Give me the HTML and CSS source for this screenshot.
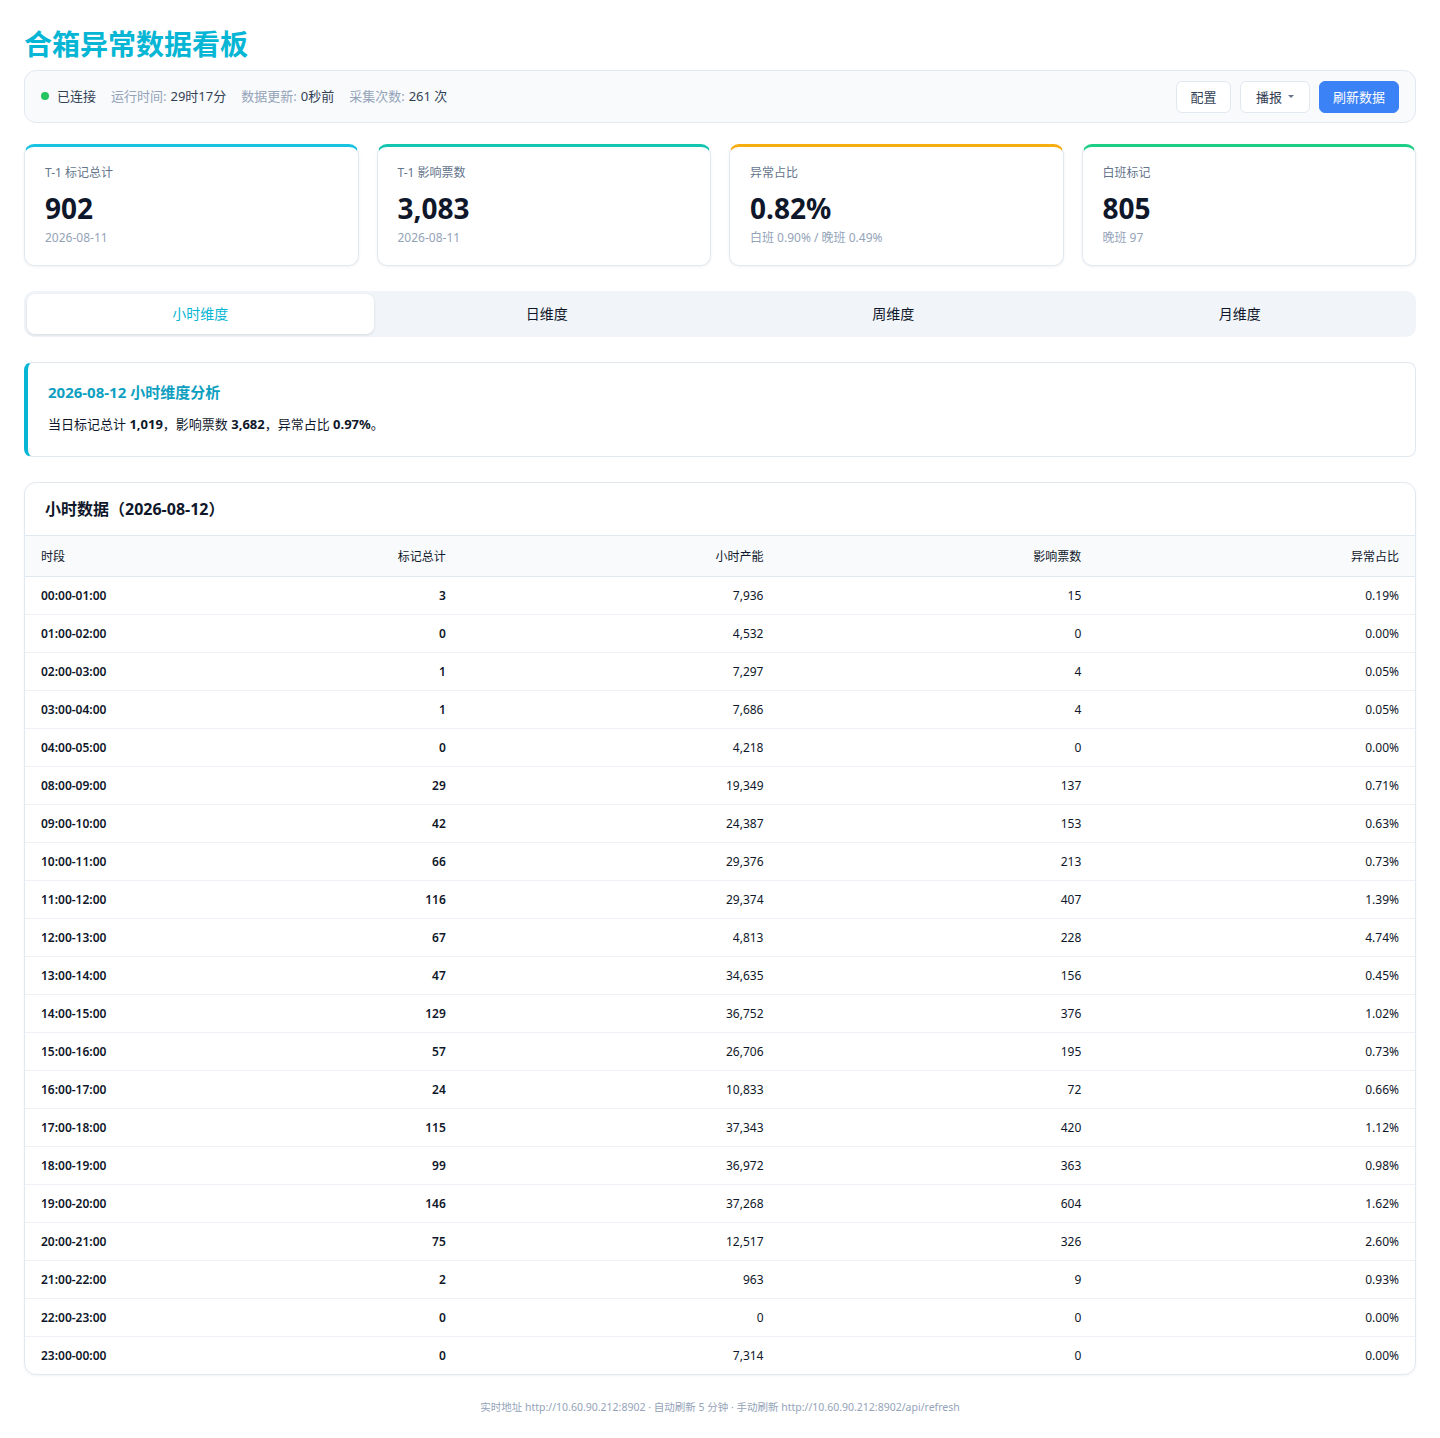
FILE: index.html
```html
<!DOCTYPE html>
<html lang="zh-CN">
<head>
  <meta charset="UTF-8" />
  <meta name="viewport" content="width=device-width, initial-scale=1.0"/>
  <title>合箱异常数据看板</title>
  <link rel="stylesheet" href="styles.css">
</head>
<body>
  <div class="page">
    <h1 class="title">合箱异常数据看板</h1>

    <!-- status bar -->
    <div class="status-bar">
      <div class="status-left">
        <span class="status-item"><i class="dot"></i><span class="val">已连接</span></span>
        <span class="status-item">运行时间: <span class="val">29时17分</span></span>
        <span class="status-item">数据更新: <span class="val">0秒前</span></span>
        <span class="status-item">采集次数: <span class="val">261 次</span></span>
      </div>
      <div class="status-actions">
        <button class="btn btn-config">配置</button>
        <button class="btn btn-report">播报 <span class="caret"></span></button>
        <button class="btn btn-primary">刷新数据</button>
      </div>
    </div>

    <!-- stat cards -->
    <div class="cards">
      <div class="card card-cyan">
        <div class="card-label">T-1 标记总计</div>
        <div class="card-value">902</div>
        <div class="card-sub">2026-08-11</div>
      </div>
      <div class="card card-teal">
        <div class="card-label">T-1 影响票数</div>
        <div class="card-value">3,083</div>
        <div class="card-sub">2026-08-11</div>
      </div>
      <div class="card card-amber">
        <div class="card-label">异常占比</div>
        <div class="card-value">0.82%</div>
        <div class="card-sub">白班 0.90% / 晚班 0.49%</div>
      </div>
      <div class="card card-green">
        <div class="card-label">白班标记</div>
        <div class="card-value">805</div>
        <div class="card-sub">晚班 97</div>
      </div>
    </div>

    <!-- tabs -->
    <div class="tabs">
      <div class="tab active">小时维度</div>
      <div class="tab">日维度</div>
      <div class="tab">周维度</div>
      <div class="tab">月维度</div>
    </div>

    <!-- summary -->
    <div class="summary">
      <div class="summary-title">2026-08-12 小时维度分析</div>
      <div class="summary-text">当日标记总计 <b>1,019</b>，影响票数 <b>3,682</b>，异常占比 <b>0.97%</b>。</div>
    </div>

    <!-- table -->
    <div class="table-card">
      <div class="table-title">小时数据（2026-08-12）</div>
      <table class="data-table">
        <thead>
          <tr>
            <th class="col-time">时段</th>
            <th>标记总计</th>
            <th>小时产能</th>
            <th>影响票数</th>
            <th>异常占比</th>
          </tr>
        </thead>
        <tbody id="rows"></tbody>
      </table>
    </div>

    <div class="footer">实时地址 http://10.60.90.212:8902 · 自动刷新 5 分钟 · 手动刷新 http://10.60.90.212:8902/api/refresh</div>
  </div>

  <script>
    const data = [
      ["00:00-01:00", "3", "7,936", "15", "0.19%"],
      ["01:00-02:00", "0", "4,532", "0", "0.00%"],
      ["02:00-03:00", "1", "7,297", "4", "0.05%"],
      ["03:00-04:00", "1", "7,686", "4", "0.05%"],
      ["04:00-05:00", "0", "4,218", "0", "0.00%"],
      ["08:00-09:00", "29", "19,349", "137", "0.71%"],
      ["09:00-10:00", "42", "24,387", "153", "0.63%"],
      ["10:00-11:00", "66", "29,376", "213", "0.73%"],
      ["11:00-12:00", "116", "29,374", "407", "1.39%"],
      ["12:00-13:00", "67", "4,813", "228", "4.74%"],
      ["13:00-14:00", "47", "34,635", "156", "0.45%"],
      ["14:00-15:00", "129", "36,752", "376", "1.02%"],
      ["15:00-16:00", "57", "26,706", "195", "0.73%"],
      ["16:00-17:00", "24", "10,833", "72", "0.66%"],
      ["17:00-18:00", "115", "37,343", "420", "1.12%"],
      ["18:00-19:00", "99", "36,972", "363", "0.98%"],
      ["19:00-20:00", "146", "37,268", "604", "1.62%"],
      ["20:00-21:00", "75", "12,517", "326", "2.60%"],
      ["21:00-22:00", "2", "963", "9", "0.93%"],
      ["22:00-23:00", "0", "0", "0", "0.00%"],
      ["23:00-00:00", "0", "7,314", "0", "0.00%"]
    ];
    const tbody = document.getElementById("rows");
    data.forEach(r => {
      const tr = document.createElement("tr");
      r.forEach((v, i) => {
        const td = document.createElement("td");
        td.textContent = v;
        if (i === 0) td.className = "col-time";
        if (i === 1) td.className = "strong";
        tr.appendChild(td);
      });
      tbody.appendChild(tr);
    });
  </script>
</body>
</html>
```

FILE: styles.css
```css
body {
  margin: 0;
  background: #fff;
  color: #0f172a;
  font-family: "Noto Sans", "Noto Sans CJK SC", sans-serif;
}

.page {
  padding: 24px 24px 20px;
}

.title {
  margin: 0 0 8px;
  font-size: 28px;
  line-height: 38px;
  font-weight: 700;
  color: #06b6d4;
  font-family: "Noto Sans CJK SC", sans-serif;
}

/* status bar */
.status-bar {
  display: flex;
  align-items: center;
  justify-content: space-between;
  height: 51px;
  padding: 0 16px;
  background: #f8fafc;
  border: 1px solid #e2e8f0;
  border-radius: 12px;
}

.status-left {
  display: flex;
  align-items: center;
  gap: 15px;
  font-size: 13px;
  line-height: 18px;
  color: #94a3b8;
  margin-top: -2px;
}

.status-item {
  display: flex;
  align-items: center;
  gap: 4px;
}

.status-item .val {
  color: #334155;
}

.dot {
  display: inline-block;
  width: 8px;
  height: 8px;
  margin: 0 4px 0 0;
  border-radius: 50%;
  background: #22c55e;
}

.status-actions {
  display: flex;
  gap: 9px;
}

.btn {
  height: 32px;
  padding: 0;
  border: 1px solid #e2e8f0;
  border-radius: 6px;
  background: #fff;
  color: #334155;
  font-size: 13px;
  font-family: inherit;
  white-space: nowrap;
  display: flex;
  align-items: center;
  justify-content: center;
  gap: 6px;
}

.btn-config { width: 55px; }
.btn-report { width: 70px; }

.btn-primary {
  width: 80px;
  background: #3b82f6;
  border-color: #3b82f6;
  color: #fff;
}

.caret {
  width: 0;
  height: 0;
  border-left: 3px solid transparent;
  border-right: 3px solid transparent;
  border-top: 3px solid #64748b;
}

/* stat cards */
.cards {
  display: grid;
  grid-template-columns: repeat(4, 1fr);
  gap: 18px;
  margin-top: 21px;
}

.card {
  height: 122px;
  box-sizing: border-box;
  padding: 17px 20px 0;
  border: 1px solid #e2e8f0;
  border-top: 3px solid #22d3ee;
  border-radius: 10px;
  background: #fff;
  box-shadow: 0 1px 3px rgba(15, 23, 42, 0.06);
}

.card-cyan { border-top-color: #17c3e0; }
.card-teal { border-top-color: #14c6b0; }
.card-amber { border-top-color: #f5ad10; }
.card-green { border-top-color: #1ccf85; }

.card-label {
  font-size: 12px;
  line-height: 18px;
  color: #64748b;
}

.card-value {
  margin-top: 8px;
  font-size: 28px;
  line-height: 36px;
  font-weight: 700;
  color: #0f172a;
}

.card-sub {
  margin-top: 4px;
  font-size: 12px;
  line-height: 16px;
  color: #94a3b8;
}

/* tabs */
.tabs {
  display: grid;
  grid-template-columns: repeat(4, 1fr);
  margin-top: 25px;
  padding: 3px;
  height: 46px;
  box-sizing: border-box;
  background: #f1f5f9;
  border-radius: 10px;
}

.tab {
  display: flex;
  align-items: center;
  justify-content: center;
  padding-bottom: 3px;
  font-size: 14px;
  color: #0f172a;
  border-radius: 8px;
}

.tab.active {
  background: #fff;
  color: #06b6d4;
  box-shadow: 0 1px 3px rgba(15, 23, 42, 0.12);
}

/* summary */
.summary {
  margin-top: 25px;
  height: 95px;
  box-sizing: border-box;
  padding: 18px 20px 0;
  border: 1px solid #e2e8f0;
  border-left: 4px solid #06b6d4;
  border-radius: 8px;
  background: #fff;
}

.summary-title {
  font-size: 15px;
  line-height: 22px;
  font-weight: 700;
  color: #0e9fc0;
}

.summary-text {
  margin-top: 11px;
  font-size: 13px;
  line-height: 20px;
  color: #0f172a;
}

.summary-text b {
  font-weight: 700;
}

/* table */
.table-card {
  margin-top: 25px;
  border: 1px solid #e2e8f0;
  border-radius: 12px;
  overflow: hidden;
  background: #fff;
  box-shadow: 0 1px 3px rgba(15, 23, 42, 0.05);
}

.table-title {
  height: 53px;
  box-sizing: border-box;
  padding: 0 20px 2px;
  display: flex;
  align-items: center;
  font-size: 16px;
  font-weight: 700;
  border-bottom: 1px solid #e2e8f0;
}

.data-table {
  width: 100%;
  border-collapse: collapse;
  table-layout: fixed;
  font-size: 12px;
}

.data-table th,
.data-table td {
  padding: 0 16px;
  text-align: right;
  color: #0f172a;
}

.data-table th {
  height: 40px;
  font-weight: 400;
  background: #f8fafc;
  border-bottom: 1px solid #e2e8f0;
}

.data-table td {
  height: 37px;
  border-bottom: 1px solid #eef2f6;
}

.data-table tr:last-child td {
  border-bottom: none;
}

.data-table th.col-time,
.data-table td.col-time {
  width: 87px;
  text-align: left;
}

.data-table td.col-time,
.data-table td.strong {
  font-weight: 600;
}

.footer {
  margin-top: 24px;
  text-align: center;
  font-size: 10.5px;
  color: #94a3b8;
}
```
